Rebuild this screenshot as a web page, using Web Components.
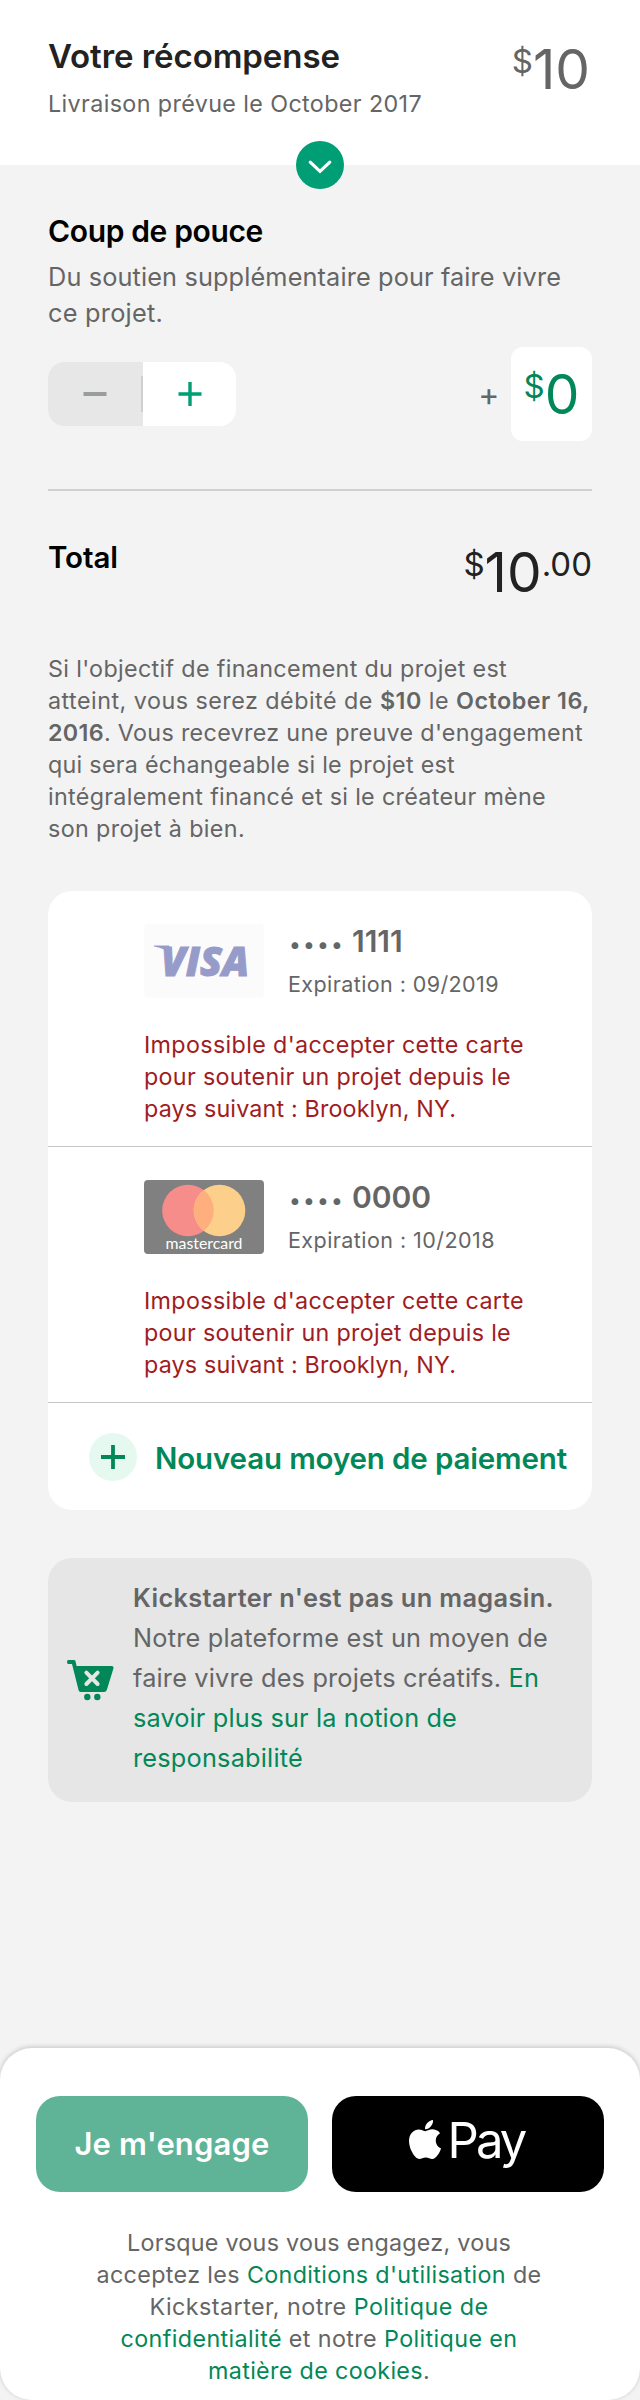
<!DOCTYPE html>
<html lang="fr">
<head>
<meta charset="utf-8">
<title>Votre récompense</title>
<style>
html,body{margin:0;padding:0;background:#f3f3f3}
body{width:640px;font-family:Inter,"Liberation Sans",sans-serif;color:#656565}
</style>
</head>
<body>
<pledge-page></pledge-page>
<script>
function define(name, html, setup) {
  customElements.define(name, class extends HTMLElement {
    constructor() {
      super();
      const t = document.createElement('template');
      t.innerHTML = html;
      this.attachShadow({mode: 'open'}).appendChild(t.content.cloneNode(true));
    }
    connectedCallback() { if (setup) setup(this, this.shadowRoot); }
  });
}

define('pledge-page', `
<style>
:host{display:block;height:2400px;overflow:hidden;background:#f3f3f3}
main{padding:48px 48px 0}
</style>
<reward-header></reward-header>
<main>
  <bonus-support></bonus-support>
  <pledge-total></pledge-total>
  <charge-note></charge-note>
  <payment-methods></payment-methods>
  <not-a-store></not-a-store>
</main>
<pledge-footer></pledge-footer>`);

define('reward-header', `
<style>
:host{display:flex;justify-content:space-between;position:relative;height:165px;box-sizing:border-box;padding:36px 50px 0 48px;background:#fff}
h1{margin:0;font-size:33px;line-height:40px;font-weight:600;color:#222}
p{margin:11.5px 0 0;font-size:23.3px;line-height:32px}
price-tag{margin-top:3.3px}
svg{position:absolute;left:296px;top:141px}
</style>
<div><h1><fit-line w="292">Votre récompense</fit-line></h1>
<p><fit-line w="374">Livraison prévue le October 2017</fit-line></p></div>
<price-tag whole="10"></price-tag>
<svg width="48" height="48" viewBox="0 0 48 48"><circle cx="24" cy="24" r="24" fill="#009e74"/><path d="M14.2 21.2 24 30.4 33.8 21.2" fill="none" stroke="#fff" stroke-width="3.2" stroke-linecap="round" stroke-linejoin="miter"/></svg>`);

define('price-tag', `
<style>
:host{display:inline-flex;align-items:flex-start;height:60px}
small{font-size:33px;line-height:40px;margin-top:1.7px}
b{font-weight:400;font-size:55px;line-height:60px}
</style><small class="c">$</small><b></b><small class="f"></small>`,
(el, r) => {
  r.querySelector('b').textContent = el.getAttribute('whole');
  const f = el.getAttribute('cents');
  if (f) r.querySelector('.f').textContent = f; else r.querySelector('.f').remove();
});

define('bonus-support', `
<style>
:host{display:block;border-bottom:2px solid #d0d0d0;padding-bottom:48px}
h2{margin:0;font-size:30px;line-height:36px;font-weight:600;color:#000}
p{margin:10px 0 16px;font-size:25.3px;line-height:36px}
.row{display:flex;align-items:center;height:94px}
.plus{margin-left:auto;margin-right:11.5px;padding-top:2px;font-size:32px;line-height:36px}
.box{display:flex;justify-content:center;width:81px;height:94px;box-sizing:border-box;padding-top:17.4px;border-radius:12px;background:#fff;color:#028858}
</style>
<h2><fit-line w="215">Coup de pouce</fit-line></h2>
<p><fit-line w="513">Du soutien supplémentaire pour faire vivre</fit-line><fit-line w="115">ce projet.</fit-line></p>
<div class="row"><amount-stepper></amount-stepper><span class="plus">+</span><span class="box"><price-tag whole="0"></price-tag></span></div>`);

define('amount-stepper', `
<style>
:host{display:grid;grid-template-columns:95px 93px;width:188px;height:64px;border-radius:16px;overflow:hidden;background:#fff}
.m{background:#e7e7e7;display:flex;align-items:center;justify-content:flex-end}
.m svg{margin-right:34.5px}
.m i{width:2px;height:36px;background:#cfcfcf}
.p{display:grid;place-items:center}
</style>
<span class="m"><svg width="24" height="24"><path d="M.5 12h23" stroke="#9a9e9b" stroke-width="4"/></svg><i></i></span>
<span class="p"><svg width="24" height="24"><path d="M.5 12h23M12 0v24" stroke="#009e74" stroke-width="3.4"/></svg></span>`);

define('pledge-total', `
<style>
:host{display:flex;justify-content:space-between;height:62px;padding-top:49px}
h2{margin:-1px 0 0;font-size:29.5px;line-height:36px;font-weight:600;color:#000}
price-tag{margin-top:2px;color:#222}
</style>
<h2><fit-line w="70">Total</fit-line></h2><price-tag whole="10" cents=".00"></price-tag>`);

define('charge-note', `
<style>:host{display:block;margin-top:50.5px;font-size:23.3px;line-height:32px}b{font-weight:600}</style>
<fit-line w="459">Si l'objectif de financement du projet est</fit-line>
<fit-line w="542">atteint, vous serez débité de <b>$10</b> le <b>October 16,</b></fit-line>
<fit-line w="535"><b>2016</b>. Vous recevrez une preuve d'engagement</fit-line>
<fit-line w="407">qui sera échangeable si le projet est</fit-line>
<fit-line w="498">intégralement financé et si le créateur mène</fit-line>
<fit-line w="197">son projet à bien.</fit-line>`);

define('payment-methods', `
<style>
:host{display:block;margin-top:46.5px;border-radius:24px;background:#fff;overflow:hidden}
.new{display:flex;align-items:flex-start;height:107px;padding-left:41px;color:#028858;font-size:29.5px;line-height:36px;font-weight:600}
svg{margin-top:30px}
.new fit-line{margin:37px 0 0 18px}
</style>
<saved-card digits="1111" expiry="09/2019" ew="211"><visa-logo></visa-logo></saved-card>
<saved-card digits="0000" expiry="10/2018" ew="207"><mastercard-logo></mastercard-logo></saved-card>
<div class="new"><svg width="48" height="48"><circle cx="24" cy="24" r="24" fill="#e5f9f0"/><path d="M12 24h24M24 12v24" stroke="#028858" stroke-width="3.8"/></svg><fit-line w="412">Nouveau moyen de paiement</fit-line></div>`);

define('saved-card', `
<style>
:host{display:block;height:256px;box-sizing:border-box;border-bottom:1px solid #c5c5c5;padding:33px 0 0 96px}
.top{display:flex;height:74px;gap:24px}
.num{display:flex;margin-top:-1px;font-size:30px;line-height:36px;font-weight:600}
.dots{display:flex;margin-right:8px;font-size:21.5px;padding-top:2.5px;height:33px}
.dots i{width:14px;font-style:normal;display:flex;justify-content:center}
.exp{margin-top:9.5px;font-size:21.5px;line-height:30px}
.err{margin-top:31px;font-size:23.3px;line-height:32px;color:#a01c23}
</style>
<div class="top"><slot></slot><div>
<div class="num"><span class="dots"><i>•</i><i>•</i><i>•</i><i>•</i></span><span class="n"></span></div>
<div class="exp"></div></div></div>
<div class="err"><fit-line w="380">Impossible d'accepter cette carte</fit-line><fit-line w="367">pour soutenir un projet depuis le</fit-line><fit-line w="312">pays suivant : Brooklyn, NY.</fit-line></div>`,
(el, r) => {
  r.querySelector('.n').textContent = el.getAttribute('digits');
  r.querySelector('.exp').innerHTML = '<fit-line w="' + el.getAttribute('ew') + '">Expiration : ' + el.getAttribute('expiry') + '</fit-line>';
});

define('visa-logo', `
<style>:host{display:block;width:120px;height:74px;border-radius:4px;background:#fbfbfb}svg{display:block}text{font:italic 800 41px "Open Sans","Noto Sans",sans-serif}</style>
<svg width="120" height="74" fill="#979bc9"><path d="M10 21.6h15l4 15-3-6q-4-6-16-8z"/><text x="17" y="51.700" textLength="88" lengthAdjust="spacingAndGlyphs" stroke="#979bc9" stroke-width="1">VISA</text></svg>`);

define('mastercard-logo', `
<style>:host{display:block;width:120px;height:74px;border-radius:4px;background:#808080}svg{display:block}text{font:400 15px Lato,sans-serif}</style>
<svg width="120" height="74"><circle cx="44" cy="30.5" r="25.8" fill="#f78d8b"/><circle cx="75.5" cy="30.5" r="25.8" fill="#fccf8b"/><path d="M59.75 10.1a25.8 25.8 0 0 1 0 40.8a25.8 25.8 0 0 1 0-40.8z" fill="#ffae7d"/><text x="21.500" y="69" textLength="77" lengthAdjust="spacingAndGlyphs" fill="#fff">mastercard</text></svg>`);

define('not-a-store', `
<style>
:host{display:flex;align-items:center;margin-top:48px;height:244px;box-sizing:border-box;border-radius:24px;background:#e6e6e6;font-size:25.3px;line-height:40px}
svg{margin:0 19px 0 19px;flex:none}
b{font-weight:600}a{color:#028858}
div{margin-top:-5px}
</style>
<svg width="47" height="41" viewBox="0 0 47 41"><path d="M1.4 0H7q1.2 0 1.5 1.2L9.6 6H45q2 .2 1.5 2.2L39.8 30q-.7 2-2.7 2H13.5q-1.5 0-1.9-1.7L5 4H1.4Q0 3.8 0 2T1.4 0z" fill="#028858"/><circle cx="20.3" cy="37" r="3.2" fill="#028858"/><circle cx="30.3" cy="37" r="3.2" fill="#028858"/><path d="M19.4 12.7 30.6 24M30.6 12.7 19.4 24" stroke="#e6e6e6" stroke-width="4" stroke-linecap="round"/></svg>
<div>
<fit-line w="421"><b>Kickstarter n'est pas un magasin.</b></fit-line>
<fit-line w="415">Notre plateforme est un moyen de</fit-line>
<fit-line w="406">faire vivre des projets créatifs. <a>En</a></fit-line>
<fit-line w="324"><a>savoir plus sur la notion de</a></fit-line>
<fit-line w="170"><a>responsabilité</a></fit-line>
</div>`);

define('pledge-footer', `
<style>
:host{display:block;margin-top:246px;height:352px;box-sizing:border-box;padding-top:48px;border-radius:32px;background:#fff;box-shadow:0 -1px 5px rgba(0,0,0,.2)}
.btns{display:grid;grid-template-columns:272px 272px;gap:24px;padding:0 36px;height:96px}
.btns>div{border-radius:24px;display:flex;color:#fff}
.go{background:#5fb396;justify-content:center;font-size:31px;line-height:40px;font-weight:600;padding-top:27.5px}
.pay{background:#000;font-size:49px;line-height:60px;box-sizing:border-box;padding:14.5px 0 0 76.5px}
.pay svg{margin:9px 7px 0 0}
.terms{margin-top:34.5px;padding-right:2px;display:flex;flex-direction:column;align-items:center;font-size:23.3px;line-height:32px}
a{color:#028858}
</style>
<div class="btns"><div class="go"><fit-line w="195">Je m'engage</fit-line></div>
<div class="pay"><svg width="32" height="39" viewBox="4 32 376 448" preserveAspectRatio="none"><path fill="#fff" d="M318.7 268.7c-.2-36.7 16.4-64.4 50-84.8-18.8-26.9-47.2-41.7-84.7-44.6-35.5-2.8-74.3 20.7-88.5 20.7-15 0-49.4-19.7-76.4-19.7C63.3 141.2 4 184.8 4 273.5q0 39.3 14.4 81.2c12.8 36.7 59 126.7 107.2 125.2 25.2-.6 43-17.9 75.8-17.9 31.8 0 48.3 17.9 76.4 17.9 48.6-.7 90.4-82.5 102.6-119.3-65.2-30.7-61.7-90-61.7-91.9zm-56.6-164.2c27.3-32.4 24.8-61.9 24-72.5-24.1 1.4-52 16.4-67.9 34.9-17.5 19.8-27.8 44.3-25.6 71.9 26.1 2 49.9-11.4 69.5-34.3z"/></svg><fit-line w="77">Pay</fit-line></div></div>
<div class="terms">
<fit-line w="384">Lorsque vous vous engagez, vous</fit-line>
<fit-line w="445">acceptez les <a>Conditions d'utilisation</a> de</fit-line>
<fit-line w="339">Kickstarter, notre <a>Politique de</a></fit-line>
<fit-line w="397"><a>confidentialité</a> et notre <a>Politique en</a></fit-line>
<fit-line w="222"><a>matière de cookies</a>.</fit-line>
</div>`);

/* A single line of text, tracked so that it spans the width given in "w". */
define('fit-line', `
<style>:host{display:block;white-space:nowrap}span{display:inline-block;vertical-align:top}</style><span><slot></slot></span>`,
(el, r) => {
  const s = r.querySelector('span');
  const gap = Number(el.getAttribute('w')) - s.getBoundingClientRect().width;
  s.style.letterSpacing = (gap / el.textContent.length).toFixed(3) + 'px';
});
</script>
</body>
</html>
